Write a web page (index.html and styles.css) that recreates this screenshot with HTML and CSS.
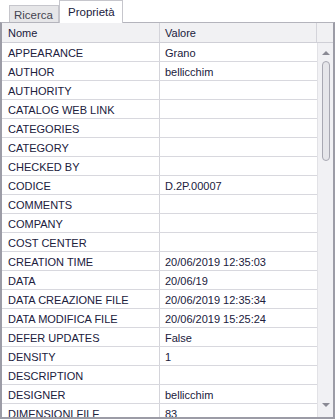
FILE: index.html
```html
<!DOCTYPE html>
<html lang="it">
<head>
  <meta charset="UTF-8">
  <title>Proprietà</title>
  <link rel="stylesheet" href="styles.css">
</head>
<body>
  <div class="tabs">
    <div class="tab">Ricerca</div>
    <div class="tab active">Proprietà</div>
  </div>

  <div class="grid">
    <div class="grid-head">
      <div class="cell name">Nome</div>
      <div class="cell value">Valore</div>
      <div class="cell spacer"></div>
    </div>
    <div class="grid-body">
      <div class="rows">
        <div class="row"><div class="cell name">APPEARANCE</div><div class="cell value">Grano</div></div>
        <div class="row"><div class="cell name">AUTHOR</div><div class="cell value">bellicchim</div></div>
        <div class="row"><div class="cell name">AUTHORITY</div><div class="cell value"></div></div>
        <div class="row"><div class="cell name">CATALOG WEB LINK</div><div class="cell value"></div></div>
        <div class="row"><div class="cell name">CATEGORIES</div><div class="cell value"></div></div>
        <div class="row"><div class="cell name">CATEGORY</div><div class="cell value"></div></div>
        <div class="row"><div class="cell name">CHECKED BY</div><div class="cell value"></div></div>
        <div class="row"><div class="cell name">CODICE</div><div class="cell value">D.2P.00007</div></div>
        <div class="row"><div class="cell name">COMMENTS</div><div class="cell value"></div></div>
        <div class="row"><div class="cell name">COMPANY</div><div class="cell value"></div></div>
        <div class="row"><div class="cell name">COST CENTER</div><div class="cell value"></div></div>
        <div class="row"><div class="cell name">CREATION TIME</div><div class="cell value">20/06/2019 12:35:03</div></div>
        <div class="row"><div class="cell name">DATA</div><div class="cell value">20/06/19</div></div>
        <div class="row"><div class="cell name">DATA CREAZIONE FILE</div><div class="cell value">20/06/2019 12:35:34</div></div>
        <div class="row"><div class="cell name">DATA MODIFICA FILE</div><div class="cell value">20/06/2019 15:25:24</div></div>
        <div class="row"><div class="cell name">DEFER UPDATES</div><div class="cell value">False</div></div>
        <div class="row"><div class="cell name">DENSITY</div><div class="cell value">1</div></div>
        <div class="row"><div class="cell name">DESCRIPTION</div><div class="cell value"></div></div>
        <div class="row"><div class="cell name">DESIGNER</div><div class="cell value">bellicchim</div></div>
        <div class="row"><div class="cell name">DIMENSIONI FILE</div><div class="cell value">83</div></div>
      </div>
      <div class="scrollbar">
        <div class="arrow up"></div>
        <div class="track">
          <div class="thumb"></div>
        </div>
        <div class="arrow down"></div>
      </div>
    </div>
  </div>
</body>
</html>
```

FILE: styles.css
```css
* {
  box-sizing: border-box;
}

body {
  margin: 0;
  width: 335px;
  height: 419px;
  overflow: hidden;
  background-color: #ffffff;
  font-family: "Liberation Sans", Arial, sans-serif;
  font-size: 11px;
  color: #20203c;
}

/* tabs */
.tabs {
  display: flex;
  align-items: flex-end;
  height: 22px;
  padding-left: 9px;
}

.tab {
  height: 17px;
  padding: 2px 5px 0 4px;
  font-size: 11.5px;
  line-height: 14px;
  background-color: #e6e6e8;
  border: 1px solid #c6c6cc;
  border-bottom: none;
  color: #444450;
}

.tab.active {
  height: 23px;
  margin-bottom: -1px;
  padding: 4px 7px 0 8px;
  line-height: 14px;
  background-color: #ffffff;
  color: #20203c;
  position: relative;
}

/* grid */
.grid {
  height: 397px;
  border: 2px solid #9c9ca6;
  border-top: 1px solid #b4b4bc;
  display: flex;
  flex-direction: column;
  overflow: hidden;
}

.grid-head {
  display: flex;
  height: 20px;
  background-color: #f1f1f3;
  border-bottom: 1px solid #cfcfd6;
  flex-shrink: 0;
}

.grid-head .cell {
  padding-top: 1px;
  line-height: 18px;
}

.cell {
  padding-left: 6px;
  white-space: nowrap;
  overflow: hidden;
}

.cell.name {
  width: 158px;
  border-right: 1px solid #d4d4da;
}

.cell.value {
  width: 157px;
  padding-left: 5px;
  border-right: 1px solid #d4d4da;
}

.cell.spacer {
  flex: 1;
}

.grid-body {
  display: flex;
  flex: 1;
  min-height: 0;
}

.rows {
  width: 315px;
}

.row {
  display: flex;
  height: 19px;
  line-height: 18px;
  border-bottom: 1px solid #d8d8de;
}

.row .cell {
  padding-top: 1px;
}

.row .cell.value {
  border-right: none;
}

/* scrollbar */
.scrollbar {
  flex: 1;
  display: flex;
  flex-direction: column;
  align-items: center;
  background-color: #f1f1f4;
  border-left: 1px solid #e2e2e6;
}

.arrow {
  width: 0;
  height: 0;
  border-left: 4px solid transparent;
  border-right: 4px solid transparent;
}

.arrow.up {
  margin-top: 8px;
  border-bottom: 4px solid #8a8a94;
}

.arrow.down {
  margin-bottom: 10px;
  border-top: 4px solid #8a8a94;
}

.track {
  flex: 1;
  width: 100%;
  display: flex;
  justify-content: center;
  padding-top: 6px;
}

.thumb {
  width: 8px;
  height: 100px;
  background-color: #e6e6ea;
  border: 1px solid #a8a8b2;
  border-radius: 4px;
}
```
